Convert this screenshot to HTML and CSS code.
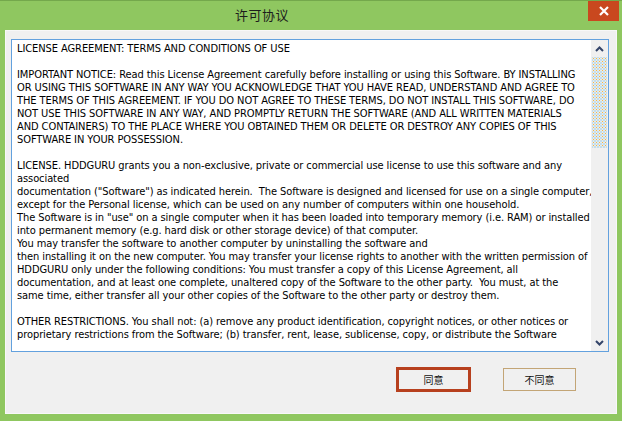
FILE: index.html
```html
<!DOCTYPE html>
<html>
<head>
<meta charset="utf-8">
<link rel="stylesheet" href="styles.css">
</head>
<body>
<div class="window">
  <div class="titlebar">
    <div class="spacer"></div>
    <div class="title">许可协议</div>
    <div class="controls">
      <div class="close">
        <svg width="12" height="12" viewBox="0 0 12 12"><path d="M2 2 L10 10 M10 2 L2 10" stroke="#fff" stroke-width="2.2" fill="none"/></svg>
      </div>
    </div>
  </div>
  <div class="client">
    <div class="textbox">
      <div class="text">LICENSE AGREEMENT: TERMS AND CONDITIONS OF USE

IMPORTANT NOTICE: Read this License Agreement carefully before installing or using this Software. BY INSTALLING
OR USING THIS SOFTWARE IN ANY WAY YOU ACKNOWLEDGE THAT YOU HAVE READ, UNDERSTAND AND AGREE TO
THE TERMS OF THIS AGREEMENT. IF YOU DO NOT AGREE TO THESE TERMS, DO NOT INSTALL THIS SOFTWARE, DO
NOT USE THIS SOFTWARE IN ANY WAY, AND PROMPTLY RETURN THE SOFTWARE (AND ALL WRITTEN MATERIALS
AND CONTAINERS) TO THE PLACE WHERE YOU OBTAINED THEM OR DELETE OR DESTROY ANY COPIES OF THIS
SOFTWARE IN YOUR POSSESSION.

LICENSE. HDDGURU grants you a non-exclusive, private or commercial use license to use this software and any
associated
documentation ("Software") as indicated herein.  The Software is designed and licensed for use on a single computer,
except for the Personal license, which can be used on any number of computers within one household.
The Software is in "use" on a single computer when it has been loaded into temporary memory (i.e. RAM) or installed
into permanent memory (e.g. hard disk or other storage device) of that computer.
You may transfer the software to another computer by uninstalling the software and
then installing it on the new computer. You may transfer your license rights to another with the written permission of
HDDGURU only under the following conditions: You must transfer a copy of this License Agreement, all
documentation, and at least one complete, unaltered copy of the Software to the other party.  You must, at the
same time, either transfer all your other copies of the Software to the other party or destroy them.

OTHER RESTRICTIONS. You shall not: (a) remove any product identification, copyright notices, or other notices or
proprietary restrictions from the Software; (b) transfer, rent, lease, sublicense, copy, or distribute the Software</div>
      <div class="scrollbar">
        <div class="arrow">
          <svg width="9" height="6" viewBox="0 0 9 6"><path d="M1 5 L4.5 1.5 L8 5" stroke="#34456a" stroke-width="2" fill="none"/></svg>
        </div>
        <div class="thumb"></div>
        <div class="track"></div>
        <div class="arrow">
          <svg width="9" height="6" viewBox="0 0 9 6"><path d="M1 1 L4.5 4.5 L8 1" stroke="#34456a" stroke-width="2" fill="none"/></svg>
        </div>
      </div>
    </div>
    <div class="buttons">
      <div class="btn btn-default">同意</div>
      <div class="btn">不同意</div>
    </div>
  </div>
</div>
</body>
</html>
```
FILE: styles.css
```css
* { box-sizing: border-box; }
html, body { margin: 0; padding: 0; }
body { width: 622px; height: 421px; overflow: hidden; background: #8fc760; }
.window {
  width: 622px;
  height: 421px;
  background: #8fc760;
  border-top: 1px solid #74a84c;
  display: flex;
  flex-direction: column;
}
.titlebar {
  height: 29px;
  display: grid;
  grid-template-columns: 1fr auto 1fr;
}
.title {
  font-family: "Noto Sans CJK SC", sans-serif;
  font-size: 13px;
  letter-spacing: 0.5px;
  color: #1c1c1c;
  line-height: 29px;
  margin-right: 98px;
  margin-top: -1px;
}
.controls { display: flex; justify-content: flex-end; align-items: flex-start; padding-right: 3px; }
.close {
  width: 31px;
  height: 20px;
  background: #c9481f;
  display: flex;
  align-items: center;
  justify-content: center;
}
.client {
  margin: 0 5px;
  height: 384px;
  background: #f0f0f0;
  border: 1px solid #f8f8f8;
  padding: 8px 7px 0 5px;
  display: flex;
  flex-direction: column;
}
.textbox {
  width: 598px;
  height: 313px;
  border: 1px solid #63a1de;
  background: #fff;
  display: flex;
}
.text {
  flex: 1;
  min-width: 0;
  padding: 2px 0 0 5px;
  font-family: "DejaVu Sans Condensed", "DejaVu Sans", sans-serif;
  font-stretch: condensed;
  font-size: 11px;
  letter-spacing: -0.08px;
  line-height: 13px;
  color: #000;
  white-space: pre;
  overflow: hidden;
}
.scrollbar {
  width: 17px;
  flex-shrink: 0;
  background: #f0f0f0;
  display: flex;
  flex-direction: column;
  align-items: center;
}
.arrow {
  width: 15px;
  height: 17px;
  display: flex;
  align-items: center;
  justify-content: center;
}
.thumb {
  width: 15px;
  height: 91px;
  background-color: #e4ecec;
  background-image: radial-gradient(circle, #f2b54e 0.8px, transparent 1px), radial-gradient(circle, #62aee8 0.8px, transparent 1px);
  background-size: 3px 3px, 3px 3px;
  background-position: 0 0, 1.5px 1.5px;
}
.track { flex: 1; }
.buttons {
  display: flex;
  justify-content: flex-end;
  gap: 32px;
  padding-right: 33px;
  margin-top: 15px;
}
.btn {
  width: 73px;
  height: 23px;
  border: 1px solid #c3a576;
  font-family: "Noto Sans CJK SC", sans-serif;
  font-size: 10px;
  line-height: 21px;
  text-align: center;
  color: #111;
  margin-top: 1px;
}
.btn-default {
  width: 75px;
  height: 25px;
  border: 3px solid #b7401e;
  line-height: 19px;
  margin-top: 0;
}
```
